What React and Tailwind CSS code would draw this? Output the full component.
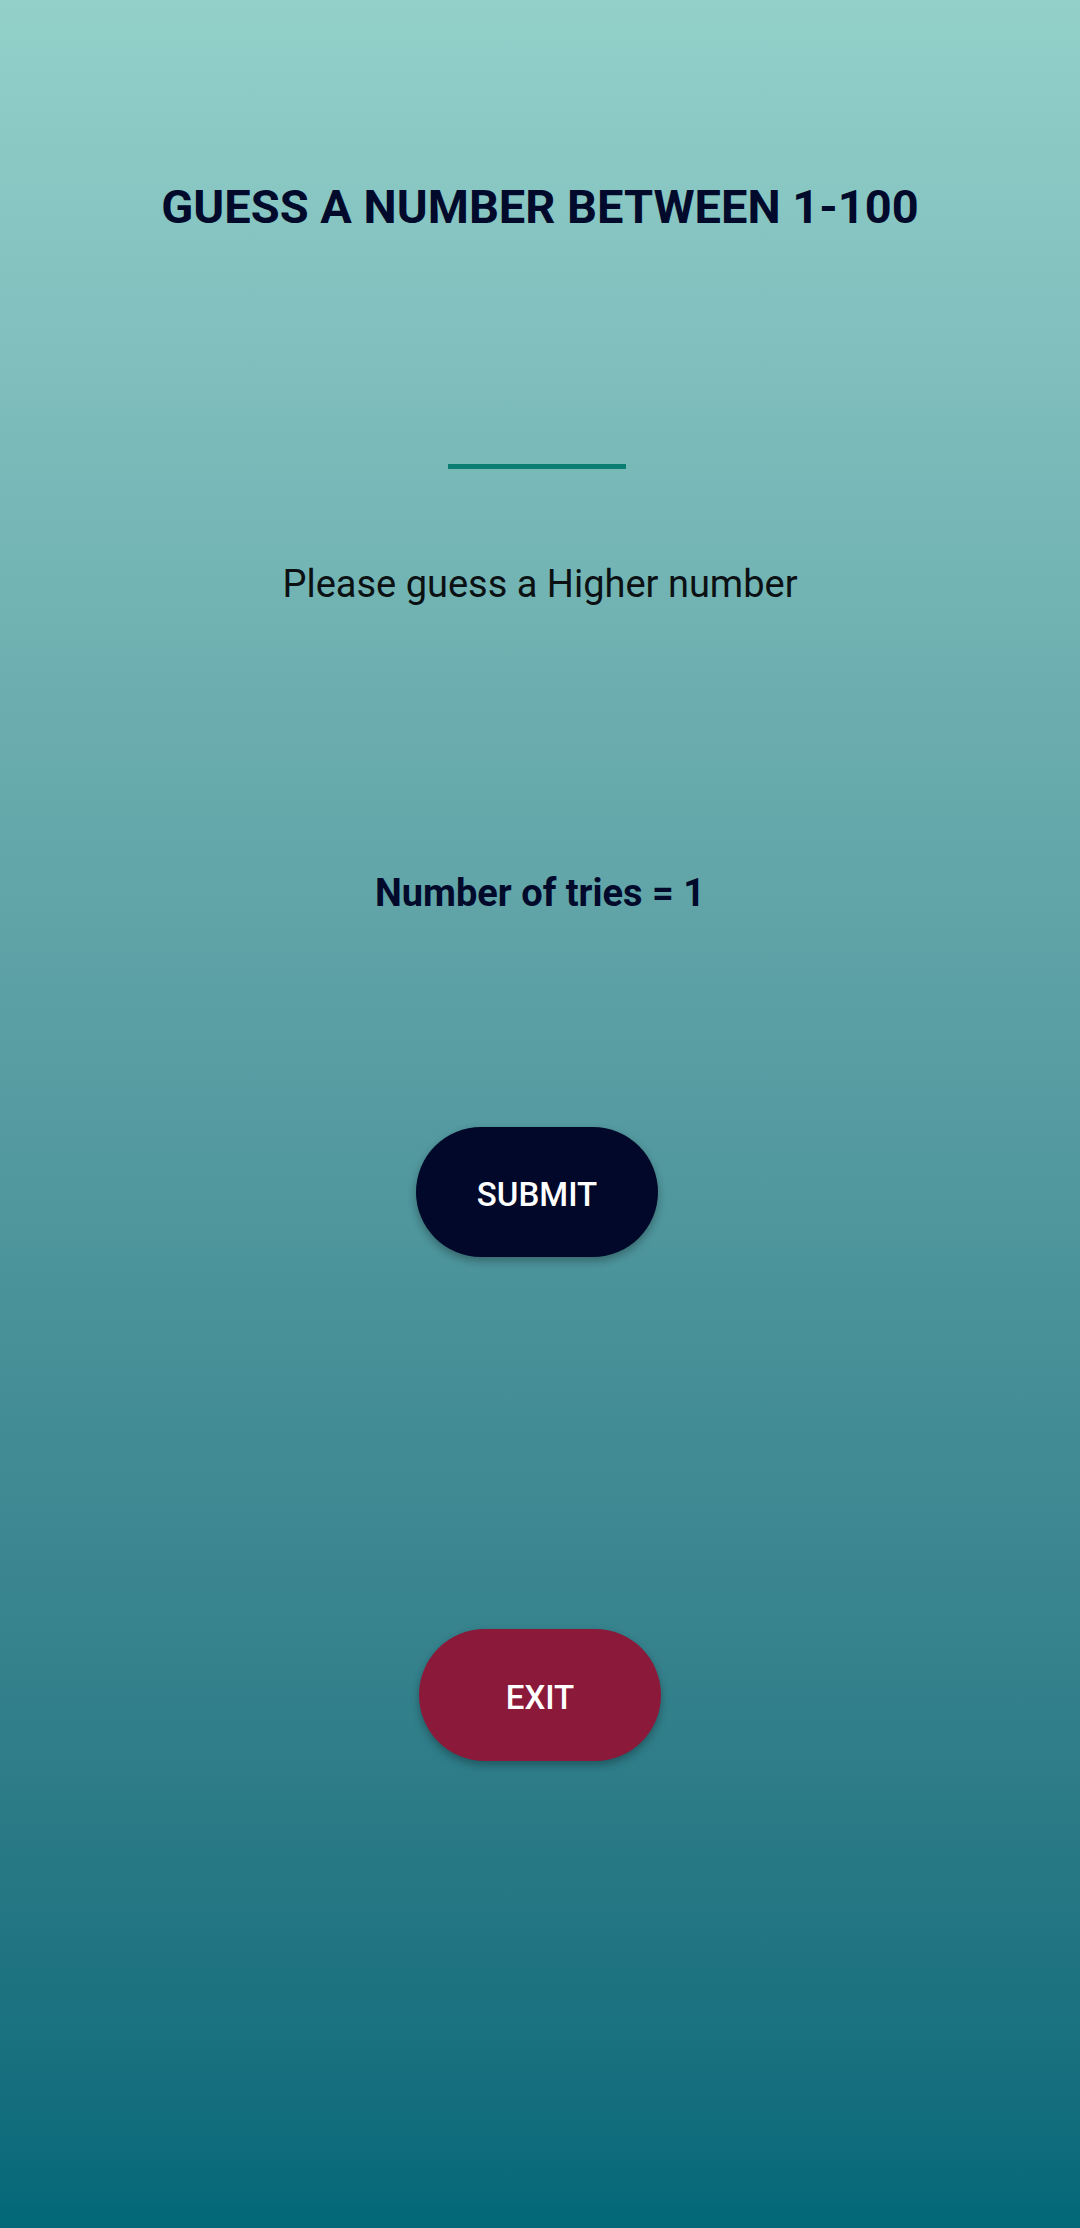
export default function App() {
  return (
    <div className="min-h-[2228px] w-full bg-gradient-to-b from-[#93d0ca] to-[#036878] flex flex-col items-center font-['Roboto',sans-serif]">
      <h1 className="mt-[179px] text-[47px] leading-[55px] font-bold text-[#020a2c]">
        GUESS A NUMBER BETWEEN 1-100
      </h1>

      {/* guess input underline */}
      <div className="mt-[230px] h-[5px] w-[178px] bg-[#0c7d72] -translate-x-[3px]" />

      <p className="mt-[92px] text-[38px] leading-[46px] text-[#0b1113]">
        Please guess a Higher number
      </p>

      <p className="mt-[264px] text-[38px] leading-[44px] font-bold text-[#020a2c]">
        Number of tries = 1
      </p>

      <button className="mt-[212px] h-[130px] w-[242px] pt-[5px] rounded-full bg-[#01082a] text-white text-[33px] font-medium shadow-[0_4px_8px_rgba(0,0,0,0.3)] -translate-x-[3px]">
        SUBMIT
      </button>

      <button className="mt-[372px] h-[132px] w-[242px] pt-[5px] rounded-full bg-[#8b1a3a] text-white text-[33px] font-medium shadow-[0_4px_8px_rgba(0,0,0,0.3)]">
        EXIT
      </button>
    </div>
  );
}
